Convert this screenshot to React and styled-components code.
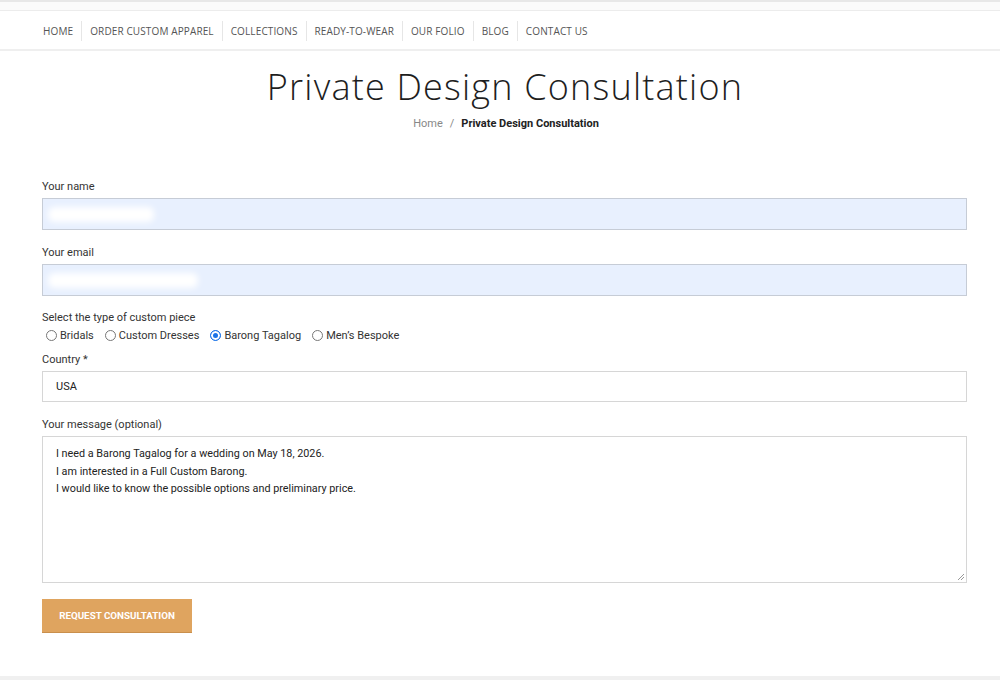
import React from 'react';
import styled, { createGlobalStyle } from 'styled-components';

const GlobalStyle = createGlobalStyle`
  html, body {
    margin: 0;
    padding: 0;
    background: #fff;
  }
  body {
    font-family: Roboto, "Liberation Sans", sans-serif;
    color: #333;
  }
  * {
    box-sizing: border-box;
  }
`;

const Page = styled.div`
  width: 1000px;
  height: 680px;
  display: flex;
  flex-direction: column;
  overflow: hidden;
`;

const TopStrip = styled.div`
  height: 11px;
  border-top: 2px solid #e8e8e8;
  border-bottom: 1px solid #ececec;
  background: #fbfbfb;
`;

const Nav = styled.nav`
  height: 40px;
  display: flex;
  align-items: center;
  padding: 1px 0 0 34px;
  border-bottom: 2px solid #efefef;
`;

const NavItem = styled.a`
  font-family: "Open Sans", "Liberation Sans", sans-serif;
  font-size: 10px;
  letter-spacing: 0.12px;
  color: #555;
  text-transform: uppercase;
  padding: 0 8px;
  line-height: 20px;
  border-left: 1px solid ${p => (p.$first ? 'transparent' : '#e6e6e6')};
`;

const Header = styled.header`
  display: flex;
  flex-direction: column;
  align-items: center;
  padding-top: 13px;
  padding-left: 10px;
`;

const Title = styled.h1`
  margin: 0;
  font-family: "Open Sans", "Liberation Sans", sans-serif;
  font-weight: 300;
  font-size: 36px;
  line-height: 46px;
  letter-spacing: 1.2px;
  color: #1e1e1e;
`;

const Breadcrumb = styled.div`
  margin-top: 6px;
  display: flex;
  gap: 7px;
  padding-left: 2px;
  font-size: 11px;
  line-height: 16px;
  color: #888;

  strong {
    color: #222;
    font-weight: 700;
  }
`;

const Form = styled.form`
  display: flex;
  flex-direction: column;
  padding: 47px 33px 0 42px;
`;

const Group = styled.div`
  display: flex;
  flex-direction: column;
  margin-bottom: ${p => p.$gap ?? 15}px;
`;

const Label = styled.label`
  font-size: 11px;
  line-height: 16px;
  color: #333;
  margin-bottom: ${p => p.$mb ?? 3}px;
`;

const Field = styled.div`
  height: ${p => p.$h ?? 32}px;
  display: flex;
  align-items: center;
  padding-left: ${p => (p.$filled ? 5 : 13)}px;
  border: 1px solid ${p => (p.$filled ? '#c6ccd6' : '#d6d6d6')};
  background: ${p => (p.$filled ? '#e8f0fe' : '#fff')};
  font-size: 11px;
  color: #222;
`;

const Blob = styled.span`
  display: block;
  width: ${p => p.$w}px;
  height: 15px;
  background: #fff;
  border-radius: 6px;
  filter: blur(3px);
`;

const RadioRow = styled.div`
  display: flex;
  align-items: center;
  height: 16px;
  padding-left: 4px;
`;

const RadioOption = styled.label`
  display: flex;
  align-items: center;
  gap: 3px;
  margin-right: 11px;
  font-size: 11px;
  color: #333;
`;

const RadioMark = styled.span`
  width: 11px;
  height: 11px;
  border-radius: 50%;
  border: 1px solid ${p => (p.$checked ? '#1a73e8' : '#777')};
  background: ${p => (p.$checked ? '#1a73e8' : '#fff')};
  box-shadow: ${p => (p.$checked ? 'inset 0 0 0 2px #fff' : 'none')};
`;

const TextArea = styled.div`
  position: relative;
  height: 147px;
  border: 1px solid #d6d6d6;
  padding: 8px 13px;
  font-size: 10.8px;
  line-height: 17.5px;
  color: #222;
`;

const Grip = styled.svg`
  position: absolute;
  right: 1px;
  bottom: 1px;
`;

const SubmitButton = styled.button`
  align-self: flex-start;
  width: 150px;
  height: 33px;
  border: none;
  background: #dfa45f;
  box-shadow: 0 1px 0 #c98f4c;
  color: #fff;
  font-family: Roboto, "Liberation Sans", sans-serif;
  font-weight: 700;
  font-size: 9.8px;
  text-transform: uppercase;
  letter-spacing: 0;
`;

const Spacer = styled.div`
  flex: 1;
`;

const BottomStrip = styled.div`
  height: 4px;
  background: #f0f0f0;
`;

const navLinks = [
  'Home',
  'Order Custom Apparel',
  'Collections',
  'Ready-to-wear',
  'Our Folio',
  'Blog',
  'Contact Us',
];

const pieces = ['Bridals', 'Custom Dresses', 'Barong Tagalog', "Men’s Bespoke"];

const App = () => {
  return (
    <Page>
      <GlobalStyle />
      <TopStrip />
      <Nav>
        {navLinks.map((link, i) => (
          <NavItem key={link} $first={i === 0}>{link}</NavItem>
        ))}
      </Nav>

      <Header>
        <Title>Private Design Consultation</Title>
        <Breadcrumb>
          <span>Home</span>
          <span>/</span>
          <strong>Private Design Consultation</strong>
        </Breadcrumb>
      </Header>

      <Form>
        <Group>
          <Label>Your name</Label>
          <Field $filled><Blob $w={106} /></Field>
        </Group>

        <Group $gap={14}>
          <Label>Your email</Label>
          <Field $filled><Blob $w={150} /></Field>
        </Group>

        <Group $gap={9}>
          <Label $mb={1}>Select the type of custom piece</Label>
          <RadioRow>
            {pieces.map(piece => (
              <RadioOption key={piece}>
                <RadioMark $checked={piece === 'Barong Tagalog'} />
                {piece}
              </RadioOption>
            ))}
          </RadioRow>
        </Group>

        <Group>
          <Label>Country *</Label>
          <Field $h={31}>USA</Field>
        </Group>

        <Group $gap={16}>
          <Label>Your message (optional)</Label>
          <TextArea>
            I need a Barong Tagalog for a wedding on May 18, 2026.<br />
            I am interested in a Full Custom Barong.<br />
            I would like to know the possible options and preliminary price.
            <Grip width="8" height="8" viewBox="0 0 8 8">
              <path d="M7 1L1 7M7 4L4 7" stroke="#999" strokeWidth="1" />
            </Grip>
          </TextArea>
        </Group>

        <SubmitButton type="button">Request Consultation</SubmitButton>
      </Form>

      <Spacer />
      <BottomStrip />
    </Page>
  );
};

export default App;
